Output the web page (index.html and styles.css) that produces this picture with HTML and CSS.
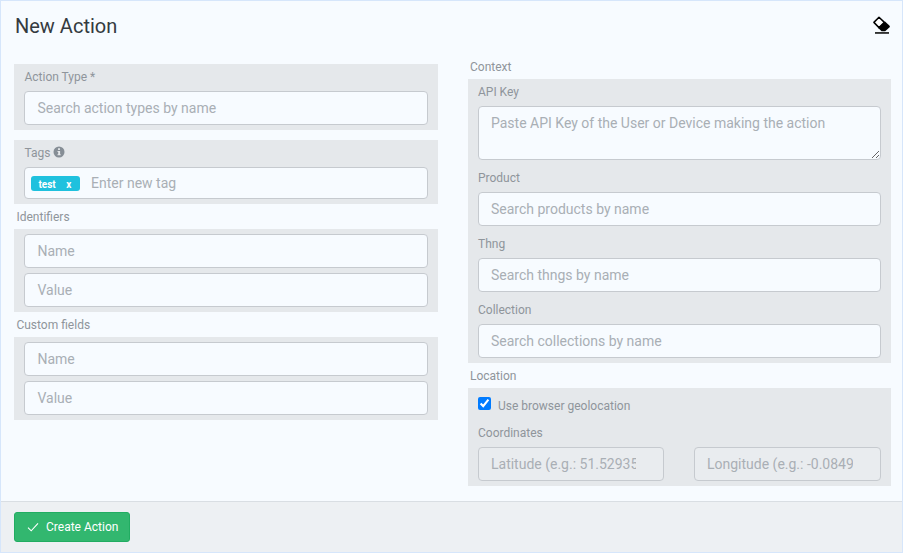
FILE: index.html

```html
<!DOCTYPE html>
<html lang="en">
<head>
  <meta charset="UTF-8" />
  <title>New Action</title>
  <link rel="stylesheet" href="styles.css">
</head>
<body>
  <div class="card">
    <div class="card-header">
      <h1>New Action</h1>
      <svg class="eraser" width="20" height="20" viewBox="0 0 20 20">
        <path d="M8 2.2 2.9 7.4 8 12.6 13.4 7.4z" fill="#fff" stroke="#000" stroke-width="1.5" stroke-linejoin="round"/>
        <path d="M14 6.6 18.6 10.8a1 1 0 0 1 0 1.4L14.2 16.2H10.6L7.2 13z" fill="#000"/>
        <rect x="4" y="17.2" width="14" height="1.5" fill="#000"/>
      </svg>
    </div>

    <div class="card-body">
      <div class="col col-left">
        <div class="panel">
          <label>Action Type *</label>
          <input type="text" placeholder="Search action types by name" />
        </div>

        <div class="panel panel-tags">
          <label>Tags
            <svg class="info" width="12" height="12" viewBox="0 0 12 12">
              <circle cx="6" cy="6" r="5.5" fill="#868e96"/>
              <rect x="5" y="2.2" width="2" height="1.8" rx="0.4" fill="#e5e8eb"/>
              <path d="M4.5 5h2.6v3.2h.6v1.1H4.5V8.2h.7V6.1h-.7z" fill="#e5e8eb"/>
            </svg>
          </label>
          <div class="tagbox">
            <span class="tag"><span>test</span><span>x</span></span>
            <input type="text" placeholder="Enter new tag" />
          </div>
        </div>

        <div class="section-label">Identifiers</div>
        <div class="panel panel-stack">
          <input type="text" placeholder="Name" />
          <input type="text" placeholder="Value" />
        </div>

        <div class="section-label">Custom fields</div>
        <div class="panel panel-stack">
          <input type="text" placeholder="Name" />
          <input type="text" placeholder="Value" />
        </div>
      </div>

      <div class="col">
        <div class="section-label">Context</div>
        <div class="panel">
          <label>API Key</label>
          <textarea placeholder="Paste API Key of the User or Device making the action"></textarea>
          <label>Product</label>
          <input type="text" placeholder="Search products by name" />
          <label>Thng</label>
          <input type="text" placeholder="Search thngs by name" />
          <label>Collection</label>
          <input type="text" placeholder="Search collections by name" />
        </div>

        <div class="section-label">Location</div>
        <div class="panel">
          <div class="check-row">
            <input type="checkbox" checked />
            <span>Use browser geolocation</span>
          </div>
          <label>Coordinates</label>
          <div class="coords">
            <input type="text" disabled placeholder="Latitude (e.g.: 51.5293589)" />
            <input type="text" disabled placeholder="Longitude (e.g.: -0.0849567)" />
          </div>
        </div>
      </div>
    </div>

    <div class="card-footer">
      <button>
        <svg width="12" height="10" viewBox="0 0 12 10">
          <path d="M1 5.6 4.2 8.8 11 1.4" fill="none" stroke="#fff" stroke-width="1.1"/>
        </svg>
        Create Action
      </button>
    </div>
  </div>
</body>
</html>
```

FILE: styles.css

```css
* {
  box-sizing: border-box;
}

body {
  margin: 0;
  font-family: Roboto, "Liberation Sans", sans-serif;
  color: #8f959b;
}

.card {
  height: 553px;
  display: flex;
  flex-direction: column;
  background-color: #f7fbff;
  border: 1px solid #d6e6fb;
}

.card-header {
  height: 53px;
  padding: 13px 11px 0 14px;
  display: flex;
  justify-content: space-between;
}

h1 {
  margin: 0;
  font-size: 20px;
  font-weight: 400;
  line-height: 24px;
  color: #343a40;
}

.eraser {
  margin-top: 1px;
}

.card-body {
  flex: 1;
  padding: 0 11px 0 13.45px;
  display: grid;
  grid-template-columns: 423.55px 423px;
  column-gap: 30px;
}

.col-left {
  padding-top: 10px;
}

.panel {
  background-color: #e5e8eb;
  padding: 5px 10px;
  display: flex;
  flex-direction: column;
}

.panel + .panel {
  margin-top: 10px;
}

.panel-stack {
  gap: 5px;
}

label {
  display: block;
  font-size: 12px;
  line-height: 16px;
  margin-bottom: 6px;
}

input + label,
textarea + label,
.check-row + label {
  margin-top: 10px;
}

input[type="text"],
textarea {
  display: block;
  width: 100%;
  height: 34px;
  padding: 6px 12px;
  font-family: inherit;
  font-size: 14px;
  background-color: #f7fbff;
  border: 1px solid #c6cacf;
  border-radius: 4px;
  outline: none;
}

textarea {
  height: 54px;
  padding-top: 8px;
}

input::placeholder,
textarea::placeholder {
  color: #a9afb5;
  opacity: 1;
}

input[type="text"]:disabled {
  background-color: #e9ecef;
  padding-right: 27px;
}

.section-label {
  height: 25px;
  padding-left: 2px;
  font-size: 12px;
  line-height: 27px;
}

.info {
  vertical-align: -1px;
}

.tagbox {
  height: 32px;
  padding: 0 6px;
  display: flex;
  align-items: center;
  background-color: #f7fbff;
  border: 1px solid #c6cacf;
  border-radius: 4px;
}

.tag {
  width: 49px;
  height: 15px;
  padding: 0 9px 0 7px;
  display: flex;
  justify-content: space-between;
  font-size: 10px;
  font-weight: 700;
  line-height: 17px;
  color: #fff;
  background-color: #1fc1de;
  border-radius: 3px;
}

.tagbox input[type="text"] {
  flex: 1;
  height: 28px;
  padding: 0 10.6px;
  background: none;
  border: none;
}

.check-row {
  height: 22px;
  display: flex;
  align-items: center;
  gap: 7px;
  font-size: 12px;
}

.check-row span {
  padding-top: 4px;
}

.check-row input {
  width: 13px;
  height: 13px;
  margin: 0 0 1px;
  accent-color: #007bff;
}

.coords {
  display: grid;
  grid-template-columns: 186px 187px;
  column-gap: 30px;
}

.card-footer {
  height: 51px;
  padding: 10px 13px;
  background-color: #edf0f3;
  border-top: 1px solid #d9dee3;
}

button {
  width: 116px;
  height: 30px;
  padding: 0 0 0 12px;
  display: flex;
  align-items: center;
  gap: 7px;
  font-family: inherit;
  font-size: 12px;
  color: #fff;
  background-color: #32b76f;
  border: 1px solid #21ad62;
  border-radius: 3px;
}
```
